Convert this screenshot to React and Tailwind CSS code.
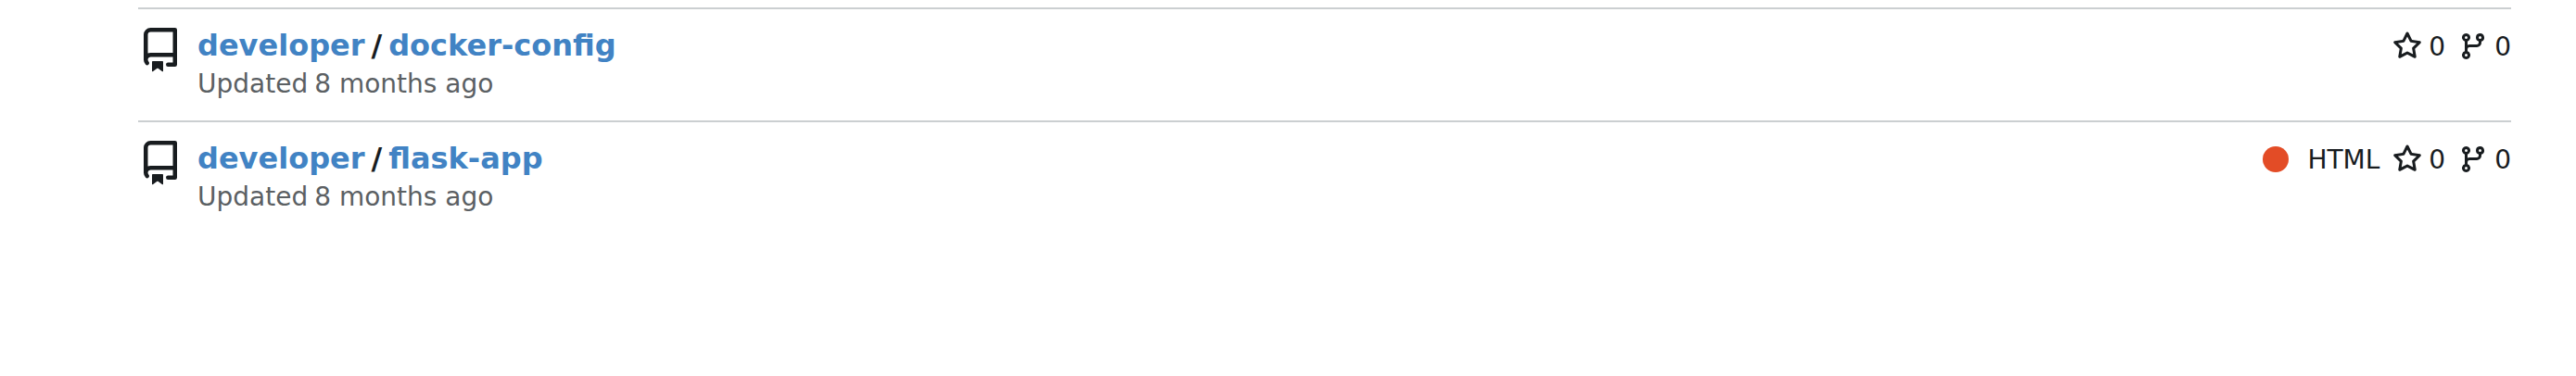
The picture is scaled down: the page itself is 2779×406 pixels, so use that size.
const REPO_PATH =
  'M2 2.5A2.5 2.5 0 0 1 4.5 0h8.75a.75.75 0 0 1 .75.75v12.5a.75.75 0 0 1-.75.75h-2.5a.75.75 0 0 1 0-1.5h1.75v-2h-8a1 1 0 0 0-.714 1.7.75.75 0 1 1-1.072 1.05A2.495 2.495 0 0 1 2 11.5Zm10.5-1h-8a1 1 0 0 0-1 1v6.708A2.486 2.486 0 0 1 4.5 9h8ZM5 12.25a.25.25 0 0 1 .25-.25h3.5a.25.25 0 0 1 .25.25v3.25a.25.25 0 0 1-.4.2l-1.45-1.087a.249.249 0 0 0-.3 0L5.4 15.7a.25.25 0 0 1-.4-.2Z';
const STAR_PATH =
  'M8 .25a.75.75 0 0 1 .673.418l1.882 3.815 4.21.612a.75.75 0 0 1 .416 1.279l-3.046 2.97.719 4.192a.751.751 0 0 1-1.088.791L8 12.347l-3.766 1.98a.75.75 0 0 1-1.088-.79l.72-4.194L.818 6.374a.75.75 0 0 1 .416-1.28l4.21-.611L7.327.668A.75.75 0 0 1 8 .25Zm0 2.445L6.615 5.5a.75.75 0 0 1-.564.41l-3.097.45 2.24 2.184a.75.75 0 0 1 .216.664l-.528 3.084 2.769-1.456a.75.75 0 0 1 .698 0l2.77 1.456-.53-3.084a.75.75 0 0 1 .216-.664l2.24-2.183-3.096-.45a.75.75 0 0 1-.564-.41L8 2.694Z';
const BRANCH_PATH =
  'M9.5 3.25a2.25 2.25 0 1 1 3 2.122V6A2.5 2.5 0 0 1 10 8.5H6a1 1 0 0 0-1 1v1.128a2.251 2.251 0 1 1-1.5 0V5.372a2.25 2.25 0 1 1 1.5 0v1.836A2.493 2.493 0 0 1 6 7h4a1 1 0 0 0 1-1v-.628A2.25 2.25 0 0 1 9.5 3.25Zm-6 0a.75.75 0 1 0 1.5 0 .75.75 0 0 0-1.5 0Zm8.25-.75a.75.75 0 1 0 0 1.5.75.75 0 0 0 0-1.5ZM4.25 12a.75.75 0 1 0 0 1.5.75.75 0 0 0 0-1.5Z';

const repos = [
  { owner: 'developer', name: 'docker-config', updated: '8 months ago', stars: 0, forks: 0 },
  { owner: 'developer', name: 'flask-app', updated: '8 months ago', language: 'HTML', stars: 0, forks: 0 },
];

function Icon({ path, className }) {
  return (
    <svg viewBox="0 0 16 16" fill="currentColor" aria-hidden="true" className={className}>
      <path d={path} />
    </svg>
  );
}

function Stat({ path, label, value }) {
  return (
    <a href="#" aria-label={`${value} ${label}`} className="flex items-center gap-[7px]">
      <Icon path={path} className="size-8 shrink-0" />
      {value}
    </a>
  );
}

function RepoRow({ repo }) {
  return (
    <li className="flex items-start gap-4 border-t-2 border-[#cbcfd1] py-5">
      <Icon path={REPO_PATH} className="size-12 shrink-0" />
      <div className="min-w-0 flex-1">
        <div className="flex min-h-10 flex-wrap items-center justify-between gap-x-4">
          <h2 className="flex gap-[7px] self-start text-[32px] leading-[38px] font-bold">
            <a href="#" className="text-[#4183c4]">{repo.owner}</a>
            <span>/</span>
            <a href="#" className="text-[#4183c4]">{repo.name}</a>
          </h2>
          <div className="flex items-center gap-3.5 text-[28px] leading-[33px]">
            {repo.language && (
              <a href="#" className="flex items-center gap-5">
                <span className="size-7 rounded-full bg-[#e34c26]" />
                {repo.language}
              </a>
            )}
            <Stat path={STAR_PATH} label="stars" value={repo.stars} />
            <Stat path={BRANCH_PATH} label="forks" value={repo.forks} />
          </div>
        </div>
        <p className="mt-0.5 flex gap-[7px] text-[28px] leading-[38px] text-[#5b6063]">
          Updated <time>{repo.updated}</time>
        </p>
      </div>
    </li>
  );
}

export default function App() {
  return (
    <main className="min-h-screen bg-white pt-2 pr-[70px] pl-[149px] font-['DejaVu_Sans',sans-serif] text-[#181c1f]">
      <ul>
        {repos.map((repo) => (
          <RepoRow key={repo.name} repo={repo} />
        ))}
      </ul>
    </main>
  );
}
